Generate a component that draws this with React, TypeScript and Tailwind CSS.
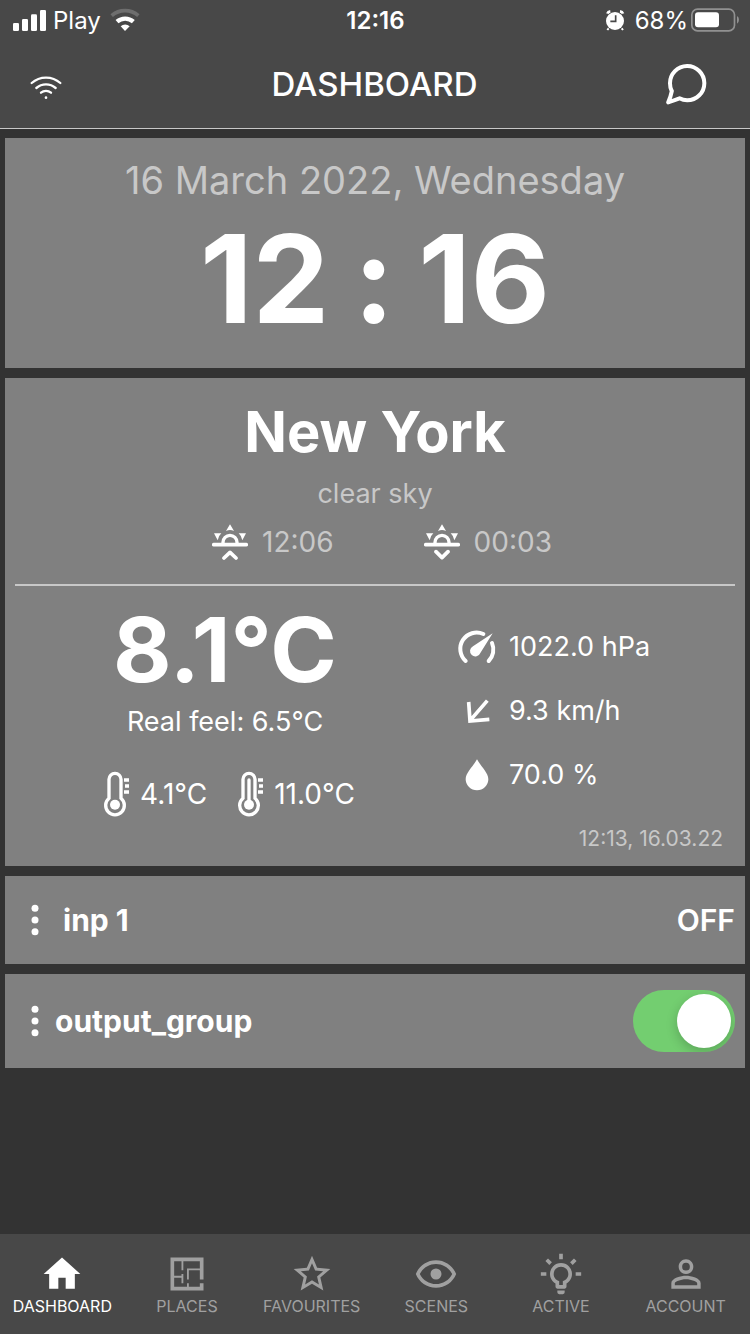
import { useState } from "react";
import type { ReactNode } from "react";
import { MdHome, MdPersonOutline, MdStarBorder } from "react-icons/md";

interface IconProps {
    className?: string;
}

interface NavItem {
    label: string;
    icon: ReactNode;
}

const FLOOR_PLAN = "M10 5V10H9V5H5V13H9V12H10V17H9V14H5V19H12V17H13V19H19V17H21V21H3V3H21V15H19V10H13V15H12V9H19V5H10Z";
const EYE = "M12,9A3,3 0 0,1 15,12A3,3 0 0,1 12,15A3,3 0 0,1 9,12A3,3 0 0,1 12,9M12,4.5C17,4.5 21.27,7.61 23,12C21.27,16.39 17,19.5 12,19.5C7,19.5 2.73,16.39 1,12C2.73,7.61 7,4.5 12,4.5M3.18,12C4.83,15.36 8.24,17.5 12,17.5C15.76,17.5 19.17,15.36 20.82,12C19.17,8.64 15.76,6.5 12,6.5C8.24,6.5 4.83,8.64 3.18,12Z";
const BULB = "M20,11H23V13H20V11M1,11H4V13H1V11M13,1V4H11V1H13M4.92,3.5L7.05,5.64L5.63,7.05L3.5,4.93L4.92,3.5M16.95,5.63L19.07,3.5L20.5,4.93L18.37,7.05L16.95,5.63M12,6A6,6 0 0,1 18,12C18,14.22 16.79,16.16 15,17.2V19A1,1 0 0,1 14,20H10A1,1 0 0,1 9,19V17.2C7.21,16.16 6,14.22 6,12A6,6 0 0,1 12,6M14,21V22A1,1 0 0,1 13,23H11A1,1 0 0,1 10,22V21H14M11,18H13V15.87C14.73,15.43 16,13.86 16,12A4,4 0 0,0 12,8A4,4 0 0,0 8,12C8,13.86 9.27,15.43 11,15.87V18Z";

function PathIcon({ d }: { d: string }) {
    return (
        <svg viewBox="0 0 24 24" className="size-11" fill="currentColor" aria-hidden="true">
            <path d={d} />
        </svg>
    );
}

const NAV_ITEMS: NavItem[] = [
    { label: "DASHBOARD", icon: <MdHome className="size-11" /> },
    { label: "PLACES", icon: <PathIcon d={FLOOR_PLAN} /> },
    { label: "FAVOURITES", icon: <MdStarBorder className="size-11" /> },
    { label: "SCENES", icon: <PathIcon d={EYE} /> },
    { label: "ACTIVE", icon: <PathIcon d={BULB} /> },
    { label: "ACCOUNT", icon: <MdPersonOutline className="size-11" /> },
];

function SunIcon({ setting = false }: { setting?: boolean }) {
    return (
        <svg viewBox="36 41 108 108" className="size-9 text-white" fill="none" stroke="currentColor" strokeLinecap="round" strokeLinejoin="round" aria-hidden="true">
            <path d="M41 103h98" strokeWidth="11" />
            <path d="M69 100v-4a21 21 0 0 1 42 0v4" strokeWidth="10" />
            <path d={setting ? "M72 124l18 18 18-18" : "M72 143l18-17 18 17"} strokeWidth="11" />
            <path d="M90 42l12 20q-12-6-24 0zM42 69h22q-9 8-11 21zM138 69h-22q9 8 11 21z" fill="currentColor" stroke="none" />
        </svg>
    );
}

function ThermometerIcon({ high = false }: { high?: boolean }) {
    return (
        <svg viewBox="36 514 81 138" className="h-[46px] w-[27px]" fill="none" stroke="currentColor" strokeWidth="10" aria-hidden="true">
            <path d="M54 596v-57a18 18 0 0 1 36 0v57a28 28 0 1 1-36 0z" />
            <circle cx="72" cy="615" r="15" fill="currentColor" stroke="none" />
            {high && <path d="M72 541v70" strokeLinecap="round" />}
            <path d="M99 541h15M102 559h12M99 577h15" />
        </svg>
    );
}

function GaugeIcon() {
    return (
        <svg viewBox="57 57 108 108" className="size-9 overflow-visible" fill="none" stroke="currentColor" strokeWidth="12" strokeLinecap="round" aria-hidden="true">
            <path d="M77 153A49 49 0 0 1 130 72M156 99A49 49 0 0 1 146 153" />
            <path d="M158 70L121 129A16 16 0 1 1 99 109Z" fill="currentColor" stroke="none" />
        </svg>
    );
}

function WindArrowIcon() {
    return (
        <svg viewBox="57 249 108 108" className="size-9" fill="none" stroke="currentColor" strokeWidth="11" aria-hidden="true">
            <path d="M142 272L90 332M86 276l4 57 58-5" />
        </svg>
    );
}

function DropIcon() {
    return (
        <svg viewBox="57 441 108 108" className="size-9" fill="currentColor" aria-hidden="true">
            <path d="M111 448c9 18 34 39 34 60a34 33 0 0 1-68 0c0-21 25-42 34-60z" />
        </svg>
    );
}

function DotsIcon({ className }: IconProps) {
    return (
        <svg viewBox="0 0 8 32" className={className} fill="currentColor" aria-hidden="true">
            <circle cx="4" cy="4.3" r="3.5" />
            <circle cx="4" cy="16" r="3.5" />
            <circle cx="4" cy="27.7" r="3.5" />
        </svg>
    );
}

function StatusBar() {
    return (
        <div className="grid h-10 grid-cols-3 items-center pl-3 pr-[11px] text-2xl leading-8">
            <div className="flex items-center">
                <svg viewBox="36 24 105 69" className="h-[23px] w-[35px]" fill="currentColor" aria-hidden="true">
                    <rect x="39" y="66" width="18" height="24" rx="4" />
                    <rect x="66" y="54" width="18" height="36" rx="4" />
                    <rect x="93" y="40" width="18" height="50" rx="4" />
                    <rect x="120" y="27" width="18" height="63" rx="4" />
                </svg>
                <span className="ml-1.5 pt-0.5">Play</span>
                <svg viewBox="331 24 90 72" className="ml-[9px] h-6 w-[30px]" fill="none" stroke="currentColor" aria-hidden="true">
                    <path d="M336 47a61 61 0 0 1 80 0" stroke="#6e6e6e" strokeWidth="11" />
                    <path d="M352 65a37 37 0 0 1 49 0" strokeWidth="13" />
                    <path d="M376 93l-13-14a20 20 0 0 1 27 0z" fill="currentColor" stroke="none" />
                </svg>
            </div>
            <div className="pt-0.5 text-center font-semibold">12:16</div>
            <div className="flex items-center justify-end">
                <svg viewBox="314 27 60 63" className="mr-2.5 h-[21px] w-5" fill="none" stroke="currentColor" aria-hidden="true">
                    <circle cx="344" cy="60" r="27" fill="currentColor" stroke="none" />
                    <path d="M321 38q2-6 9-7M368 38q-2-6-9-7" strokeWidth="8" />
                    <path d="M325 82l-4 5M364 82l4 5" strokeWidth="6" />
                    <path d="M346 43v18h-16" stroke="#484848" strokeWidth="5" />
                </svg>
                <span className="pt-0.5">68%</span>
                <svg viewBox="573 23 144 72" className="ml-[3px] h-6 w-12" fill="none" aria-hidden="true">
                    <rect x="575.500" y="26.500" width="128" height="65" rx="17" stroke="#919191" strokeWidth="5" />
                    <rect x="585" y="36" width="72" height="45" rx="9" fill="currentColor" />
                    <path d="M711 47q6 4 6 11.500t-6 11.500z" fill="#919191" />
                </svg>
            </div>
        </div>
    );
}

function Header() {
    return (
        <header className="border-b border-[#c8c8c8] bg-[#484848]">
            <StatusBar />
            <div className="flex h-[88px] items-center justify-between pl-[30px] pr-[43px]">
                <button type="button" aria-label="Connection" className="flex w-[53px] pt-1.5">
                    <svg viewBox="90 225 96 75" className="h-[25px] w-8" fill="none" stroke="currentColor" strokeWidth="7" strokeLinecap="round" aria-hidden="true">
                        <path d="M95 249a65 65 0 0 1 86 0M109 264a44 44 0 0 1 58 0M123 278a23 23 0 0 1 30 0" />
                        <circle cx="138" cy="293" r="4" fill="currentColor" stroke="none" />
                    </svg>
                </button>
                <h1 className="text-[33px] font-medium leading-10">DASHBOARD</h1>
                <button type="button" aria-label="Messages" className="flex">
                    <svg viewBox="498 191 123 123" className="size-[41px]" fill="none" stroke="currentColor" strokeWidth="12" strokeLinejoin="round" aria-hidden="true">
                        <path d="M515 272C511 264 510 257 510 249a51.500 51.500 0 1 1 51.500 51q-12 0-23-6-16 6-34 12 7-14 11-34z" />
                    </svg>
                </button>
            </div>
        </header>
    );
}

function ClockCard() {
    return (
        <section className="bg-[#808080] py-4 text-center">
            <p className="text-[38px] leading-[52px] text-[#c8c8c8]">16 March 2022, Wednesday</p>
            <p className="flex justify-center gap-6 text-[122px] font-bold leading-[146px]">
                <span>12</span>
                <span>:</span>
                <span>16</span>
            </p>
        </section>
    );
}

function WeatherCard() {
    return (
        <section className="bg-[#808080] px-2.5 pt-4 text-[27px]">
            <h2 className="text-center text-[56px] font-bold leading-[76px]">New York</h2>
            <p className="text-center leading-[48px] text-[#c8c8c8]">clear sky</p>
            <div className="flex h-12 justify-center gap-[90px] pl-3.5 text-[28px] text-[#c8c8c8]">
                <div className="flex items-center gap-3.5">
                    <SunIcon />
                    <span>12:06</span>
                </div>
                <div className="flex items-center gap-3.5">
                    <SunIcon setting />
                    <span>00:03</span>
                </div>
            </div>

            <div className="mt-[18px] flex border-t-2 border-[#c8c8c8]">
                <div className="w-7/12 pt-3 text-center">
                    <p className="text-[90px] font-bold leading-[104px]">8.1°C</p>
                    <p className="leading-10">Real feel: 6.5°C</p>
                    <div className="mt-[29px] flex justify-center gap-[30px] pl-2 text-[28px]">
                        <div className="flex items-center gap-2.5">
                            <ThermometerIcon />
                            <span>4.1°C</span>
                        </div>
                        <div className="flex items-center gap-2.5">
                            <ThermometerIcon high />
                            <span>11.0°C</span>
                        </div>
                    </div>
                </div>

                <div className="w-5/12 pb-[11px] pl-6 pt-[29px]">
                    <div className="flex h-16 items-center gap-3.5">
                        <GaugeIcon />
                        <span>1022.0 hPa</span>
                    </div>
                    <div className="flex h-16 items-center gap-3.5">
                        <WindArrowIcon />
                        <span>9.3 km/h</span>
                    </div>
                    <div className="flex h-16 items-center gap-3.5">
                        <DropIcon />
                        <span>70.0 %</span>
                    </div>
                    <p className="mt-4 pr-3 text-right text-[21px] leading-8 text-[#c8c8c8]">12:13, 16.03.22</p>
                </div>
            </div>
        </section>
    );
}

function BottomNav() {
    const [active, setActive] = useState("DASHBOARD");

    return (
        <nav className="grid grid-cols-6 bg-[#484848] py-[18px] pr-0.5">
            {NAV_ITEMS.map(({ label, icon }) => (
                <button
                    key={label}
                    type="button"
                    onClick={() => setActive(label)}
                    aria-current={active === label ? "page" : undefined}
                    className={`flex flex-col items-center ${active === label ? "text-white" : "text-[#a0a0a0]"}`}
                >
                    {icon}
                    <span className="text-base leading-5">{label}</span>
                </button>
            ))}
        </nav>
    );
}

export default function App() {
    const [groupOn, setGroupOn] = useState(true);

    return (
        <div className="flex min-h-screen flex-col bg-[#333333] font-['Inter',sans-serif] text-white">
            <Header />

            <main className="flex flex-1 flex-col gap-2.5 px-[5px] pt-[9px]">
                <ClockCard />
                <WeatherCard />

                {/* Input row */}
                <section className="flex h-[88px] items-center bg-[#808080] pr-2.5 text-[30px] font-bold">
                    <button type="button" aria-label="inp 1 options" className="pl-[26px] pr-6">
                        <DotsIcon className="h-8 w-2" />
                    </button>
                    <span className="flex-1">inp 1</span>
                    <span className="font-semibold">OFF</span>
                </section>

                {/* Output group row */}
                <section className="flex h-[94px] items-center bg-[#808080] pr-2.5 text-[30px] font-bold">
                    <button type="button" aria-label="output_group options" className="pl-[26px] pr-4">
                        <DotsIcon className="h-8 w-2" />
                    </button>
                    <label htmlFor="output-group" className="flex-1">output_group</label>
                    <input
                        id="output-group"
                        type="checkbox"
                        role="switch"
                        checked={groupOn}
                        onChange={(e) => setGroupOn(e.target.checked)}
                        className="flex h-[62px] w-[102px] cursor-pointer appearance-none items-center overflow-hidden rounded-full bg-[#a0a0a0] p-1 before:size-[54px] before:rounded-full before:bg-white before:shadow-[0_4px_12px_rgba(0,0,0,0.2)] before:content-[''] checked:justify-end checked:bg-[#73ce70]"
                    />
                </section>
            </main>

            <BottomNav />
        </div>
    );
}
